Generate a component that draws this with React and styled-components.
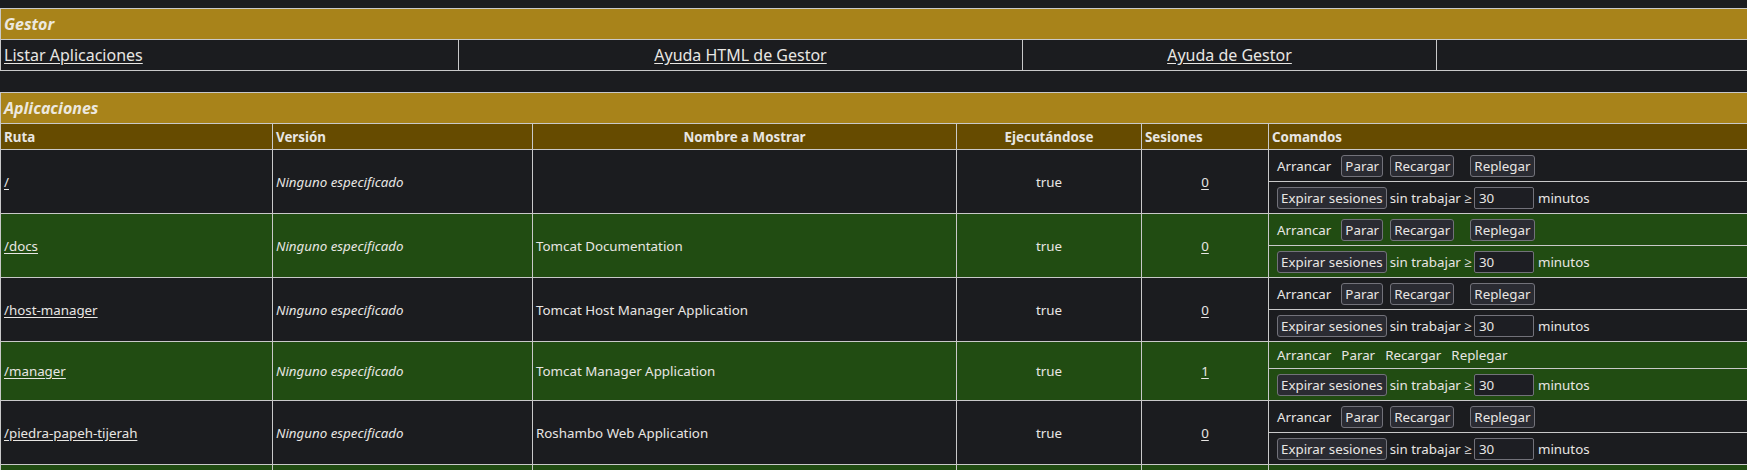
import React from "react";
import styled, { createGlobalStyle } from "styled-components";

const Global = createGlobalStyle`
  html, body { margin: 0; padding: 0; background: #1b1c1f; overflow: hidden; }
  body {
    padding-top: 8px;
    font-family: "Noto Sans", "Open Sans", sans-serif;
    color: #e8e6e3;
  }
`;

const C = {
  bg: "#1b1c1f",
  gold: "#a8831a",
  brown: "#664b00",
  green: "#214c12",
  line: "#c9c9c9",
  text: "#e8e6e3",
};

const Page = styled.div`
  width: calc(100% + 2px);
  display: flex;
  flex-direction: column;
  gap: 21px;
`;

const Table = styled.table`
  width: 100%;
  border-collapse: collapse;
  table-layout: fixed;
  border: 1px solid ${C.line};
`;

const Cell = styled.td`
  border: 1px solid ${C.line};
  padding: 0 3px;
  vertical-align: middle;
  text-align: ${(p) => p.$align || "left"};
  white-space: nowrap;
  overflow: hidden;
`;

const TitleCell = styled(Cell)`
  background: ${C.gold};
  height: 30px;
  font-size: 16px;
  font-weight: 700;
  font-style: italic;
  color: #ece8df;
`;

const NavCell = styled(Cell)`
  background: ${C.bg};
  height: 30px;
  font-size: 16px;
`;

const HeadCell = styled(Cell)`
  background: ${C.brown};
  height: 25px;
  font-size: 13.33px;
  font-weight: 700;
`;

const DataCell = styled(Cell)`
  background: ${(p) => (p.$alt ? C.green : C.bg)};
  font-size: 13.33px;
  font-style: ${(p) => (p.$italic ? "italic" : "normal")};
`;

const CmdCell = styled(Cell)`
  background: ${(p) => (p.$alt ? C.green : C.bg)};
  height: ${(p) => p.$h}px;
  padding: 0;
  font-size: 13.33px;
`;

const CmdLine = styled.div`
  display: flex;
  align-items: center;
  padding-left: 8px;
  white-space: nowrap;
`;

const Link = styled.a`
  color: ${C.text};
  text-decoration: underline;
  text-underline-offset: 2px;
  cursor: pointer;
`;

const Plain = styled.span`
  margin-left: ${(p) => p.$ml || 0}px;
`;

const Btn = styled.button`
  margin-left: ${(p) => p.$ml || 0}px;
  height: 22px;
  padding: 0 3px;
  font-family: "Noto Sans", "Open Sans", sans-serif;
  font-size: 13.33px;
  line-height: 18px;
  color: ${C.text};
  background: #2a2b32;
  border: 1px solid #72727a;
  border-radius: 3px;
  cursor: pointer;
`;

const Idle = styled.input`
  margin: 0 4px 0 2px;
  width: 60px;
  height: 22px;
  box-sizing: border-box;
  padding: 0 4px;
  font-family: "Noto Sans", "Open Sans", sans-serif;
  font-size: 13.33px;
  color: ${C.text};
  background: #1d1e23;
  border: 1px solid #72727a;
  border-radius: 2px;
`;

const apps = [
  { path: "/", name: "", sessions: "0" },
  { path: "/docs", name: "Tomcat Documentation", sessions: "0" },
  { path: "/host-manager", name: "Tomcat Host Manager Application", sessions: "0" },
  { path: "/manager", name: "Tomcat Manager Application", sessions: "1", self: true },
  { path: "/piedra-papeh-tijerah", name: "Roshambo Web Application", sessions: "0" },
  { path: "/examples", name: "Servlet and JSP Examples", sessions: "0" },
];

function AppRows({ app, alt }) {
  return (
    <>
      <tr>
        <DataCell rowSpan={2} $alt={alt}>
          <Link>{app.path}</Link>
        </DataCell>
        <DataCell rowSpan={2} $alt={alt} $italic>
          Ninguno especificado
        </DataCell>
        <DataCell rowSpan={2} $alt={alt}>
          {app.name}
        </DataCell>
        <DataCell rowSpan={2} $alt={alt} $align="center">
          true
        </DataCell>
        <DataCell rowSpan={2} $alt={alt} $align="center">
          <Link>{app.sessions}</Link>
        </DataCell>
        <CmdCell $alt={alt} $h={app.self ? 26 : 31}>
          {app.self ? (
            <CmdLine>
              <Plain>Arrancar</Plain>
              <Plain $ml={10}>Parar</Plain>
              <Plain $ml={10}>Recargar</Plain>
              <Plain $ml={10}>Replegar</Plain>
            </CmdLine>
          ) : (
            <CmdLine>
              <Plain>Arrancar</Plain>
              <Btn $ml={10}>Parar</Btn>
              <Btn $ml={7}>Recargar</Btn>
              <Btn $ml={16}>Replegar</Btn>
            </CmdLine>
          )}
        </CmdCell>
      </tr>
      <tr>
        <CmdCell $alt={alt} $h={31}>
          <CmdLine>
            <Btn>Expirar sesiones</Btn>
            <Plain $ml={3}>sin trabajar ≥</Plain>
            <Idle defaultValue="30" size={5} />
            <Plain>minutos</Plain>
          </CmdLine>
        </CmdCell>
      </tr>
    </>
  );
}

export default function App() {
  return (
    <>
      <Global />
      <Page>
        <Table>
          <colgroup>
            <col style={{ width: 458 }} />
            <col style={{ width: 564 }} />
            <col style={{ width: 414 }} />
            <col />
          </colgroup>
          <tbody>
            <tr>
              <TitleCell colSpan={4}>Gestor</TitleCell>
            </tr>
            <tr>
              <NavCell>
                <Link>Listar Aplicaciones</Link>
              </NavCell>
              <NavCell $align="center">
                <Link>Ayuda HTML de Gestor</Link>
              </NavCell>
              <NavCell $align="center">
                <Link>Ayuda de Gestor</Link>
              </NavCell>
              <NavCell $align="right" />
            </tr>
          </tbody>
        </Table>

        <Table>
          <colgroup>
            <col style={{ width: 272 }} />
            <col style={{ width: 260 }} />
            <col style={{ width: 424 }} />
            <col style={{ width: 185 }} />
            <col style={{ width: 127 }} />
            <col />
          </colgroup>
          <tbody>
            <tr>
              <TitleCell colSpan={6}>Aplicaciones</TitleCell>
            </tr>
            <tr>
              <HeadCell>Ruta</HeadCell>
              <HeadCell>Versión</HeadCell>
              <HeadCell $align="center">Nombre a Mostrar</HeadCell>
              <HeadCell $align="center">Ejecutándose</HeadCell>
              <HeadCell>Sesiones</HeadCell>
              <HeadCell>Comandos</HeadCell>
            </tr>
            {apps.map((a, i) => (
              <AppRows key={a.path} app={a} alt={i % 2 === 1} />
            ))}
          </tbody>
        </Table>
      </Page>
    </>
  );
}
